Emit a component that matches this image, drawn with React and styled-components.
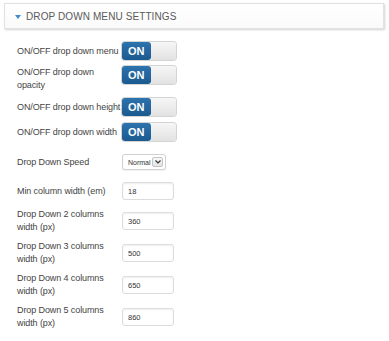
import React from "react";
import styled, { createGlobalStyle } from "styled-components";

const Global = createGlobalStyle`
  html, body { margin: 0; padding: 0; background: #fff; }
  body { font-family: "Liberation Sans", Arial, sans-serif; }
`;

const Page = styled.div`
  width: 389px;
  height: 341px;
  padding: 3px 0 0 4px;
  box-sizing: border-box;
  overflow: hidden;
`;

const Header = styled.div`
  width: 380px;
  height: 26px;
  box-sizing: border-box;
  border: 1px solid #e2e2e2;
  background: linear-gradient(#ffffff, #fafafa);
  box-shadow: 1px 1px 2px rgba(0, 0, 0, 0.18);
  display: flex;
  align-items: center;
  padding-left: 10px;
  gap: 5px;
`;

const Caret = styled.span`
  width: 0;
  height: 0;
  border-left: 3px solid transparent;
  border-right: 3px solid transparent;
  border-top: 4px solid #3f8ccc;
  margin-top: 1px;
`;

const Title = styled.span`
  font-size: 10px;
  color: #5a5a5a;
  letter-spacing: 0.1px;
`;

const Rows = styled.div`
  display: flex;
  flex-direction: column;
  gap: 6px;
  padding: 13px 0 0 13px;
`;

const Row = styled.div`
  display: flex;
  align-items: ${(p) => (p.$top ? "flex-start" : "center")};
  margin-top: ${(p) => p.$mt || 0}px;
`;

const Label = styled.div`
  width: 105px;
  flex: none;
  font-size: 9px;
  line-height: 13px;
  color: #444;
  letter-spacing: -0.1px;
`;

const Toggle = styled.div`
  width: 54px;
  height: 18px;
  display: flex;
  border-radius: 3px;
  overflow: hidden;
  box-shadow: 0 0 0 1px #d4d4d4;
`;

const ToggleOn = styled.div`
  width: 29px;
  background: linear-gradient(#2d73ad, #1b5a8f);
  color: #fff;
  font-weight: bold;
  font-size: 11px;
  display: flex;
  align-items: center;
  padding-left: 6px;
  box-sizing: border-box;
  border-radius: 0 3px 3px 0;
`;

const ToggleOff = styled.div`
  flex: 1;
  background: linear-gradient(#f6f6f6, #e2e2e2);
`;

const Select = styled.div`
  width: 44px;
  height: 16px;
  box-sizing: border-box;
  border: 1px solid #d0d0d0;
  border-radius: 3px;
  background: #fff;
  display: flex;
  align-items: center;
  justify-content: space-between;
  padding: 0 2px 0 5px;
  font-size: 7px;
  color: #333;
  box-shadow: 0 1px 1px rgba(0, 0, 0, 0.06);
`;

const SelectArrow = styled.span`
  width: 11px;
  height: 10px;
  box-sizing: border-box;
  border: 1px solid #c4c4c4;
  border-radius: 2px;
  background: linear-gradient(#f8f8f8, #e4e4e4);
  display: flex;
  align-items: center;
  justify-content: center;
`;

const Input = styled.div`
  width: 52px;
  height: 18px;
  box-sizing: border-box;
  border: 1px solid #dcdcdc;
  border-radius: 3px;
  background: #fff;
  box-shadow: inset 0 1px 2px rgba(0, 0, 0, 0.07);
  display: flex;
  align-items: center;
  padding-left: 5px;
  font-size: 7.5px;
  color: #333;
`;

const On = () => (
  <Toggle>
    <ToggleOn>ON</ToggleOn>
    <ToggleOff />
  </Toggle>
);

const inputs = [
  ["Drop Down 2 columns width (px)", "360", 2],
  ["Drop Down 3 columns width (px)", "500", 0],
  ["Drop Down 4 columns width (px)", "650", 0],
  ["Drop Down 5 columns width (px)", "860", 0],
];

export default function App() {
  return (
    <Page>
      <Global />
      <Header>
        <Caret />
        <Title>DROP DOWN MENU SETTINGS</Title>
      </Header>
      <Rows>
        <Row>
          <Label>ON/OFF drop down menu</Label>
          <On />
        </Row>
        <Row $top>
          <Label>ON/OFF drop down opacity</Label>
          <On />
        </Row>
        <Row>
          <Label>ON/OFF drop down height</Label>
          <On />
        </Row>
        <Row $mt={1}>
          <Label>ON/OFF drop down width</Label>
          <On />
        </Row>
        <Row $mt={7}>
          <Label>Drop Down Speed</Label>
          <Select>
            Normal
            <SelectArrow>
              <svg width="6" height="4" viewBox="0 0 6 4">
                <path d="M0.5 0.5 L3 3 L5.5 0.5" fill="none" stroke="#333" strokeWidth="1.2" />
              </svg>
            </SelectArrow>
          </Select>
        </Row>
        <Row $mt={6}>
          <Label>Min column width (em)</Label>
          <Input>18</Input>
        </Row>
        {inputs.map(([l, v, mt]) => (
          <Row key={v} $mt={mt}>
            <Label>{l}</Label>
            <Input>{v}</Input>
          </Row>
        ))}
      </Rows>
    </Page>
  );
}
